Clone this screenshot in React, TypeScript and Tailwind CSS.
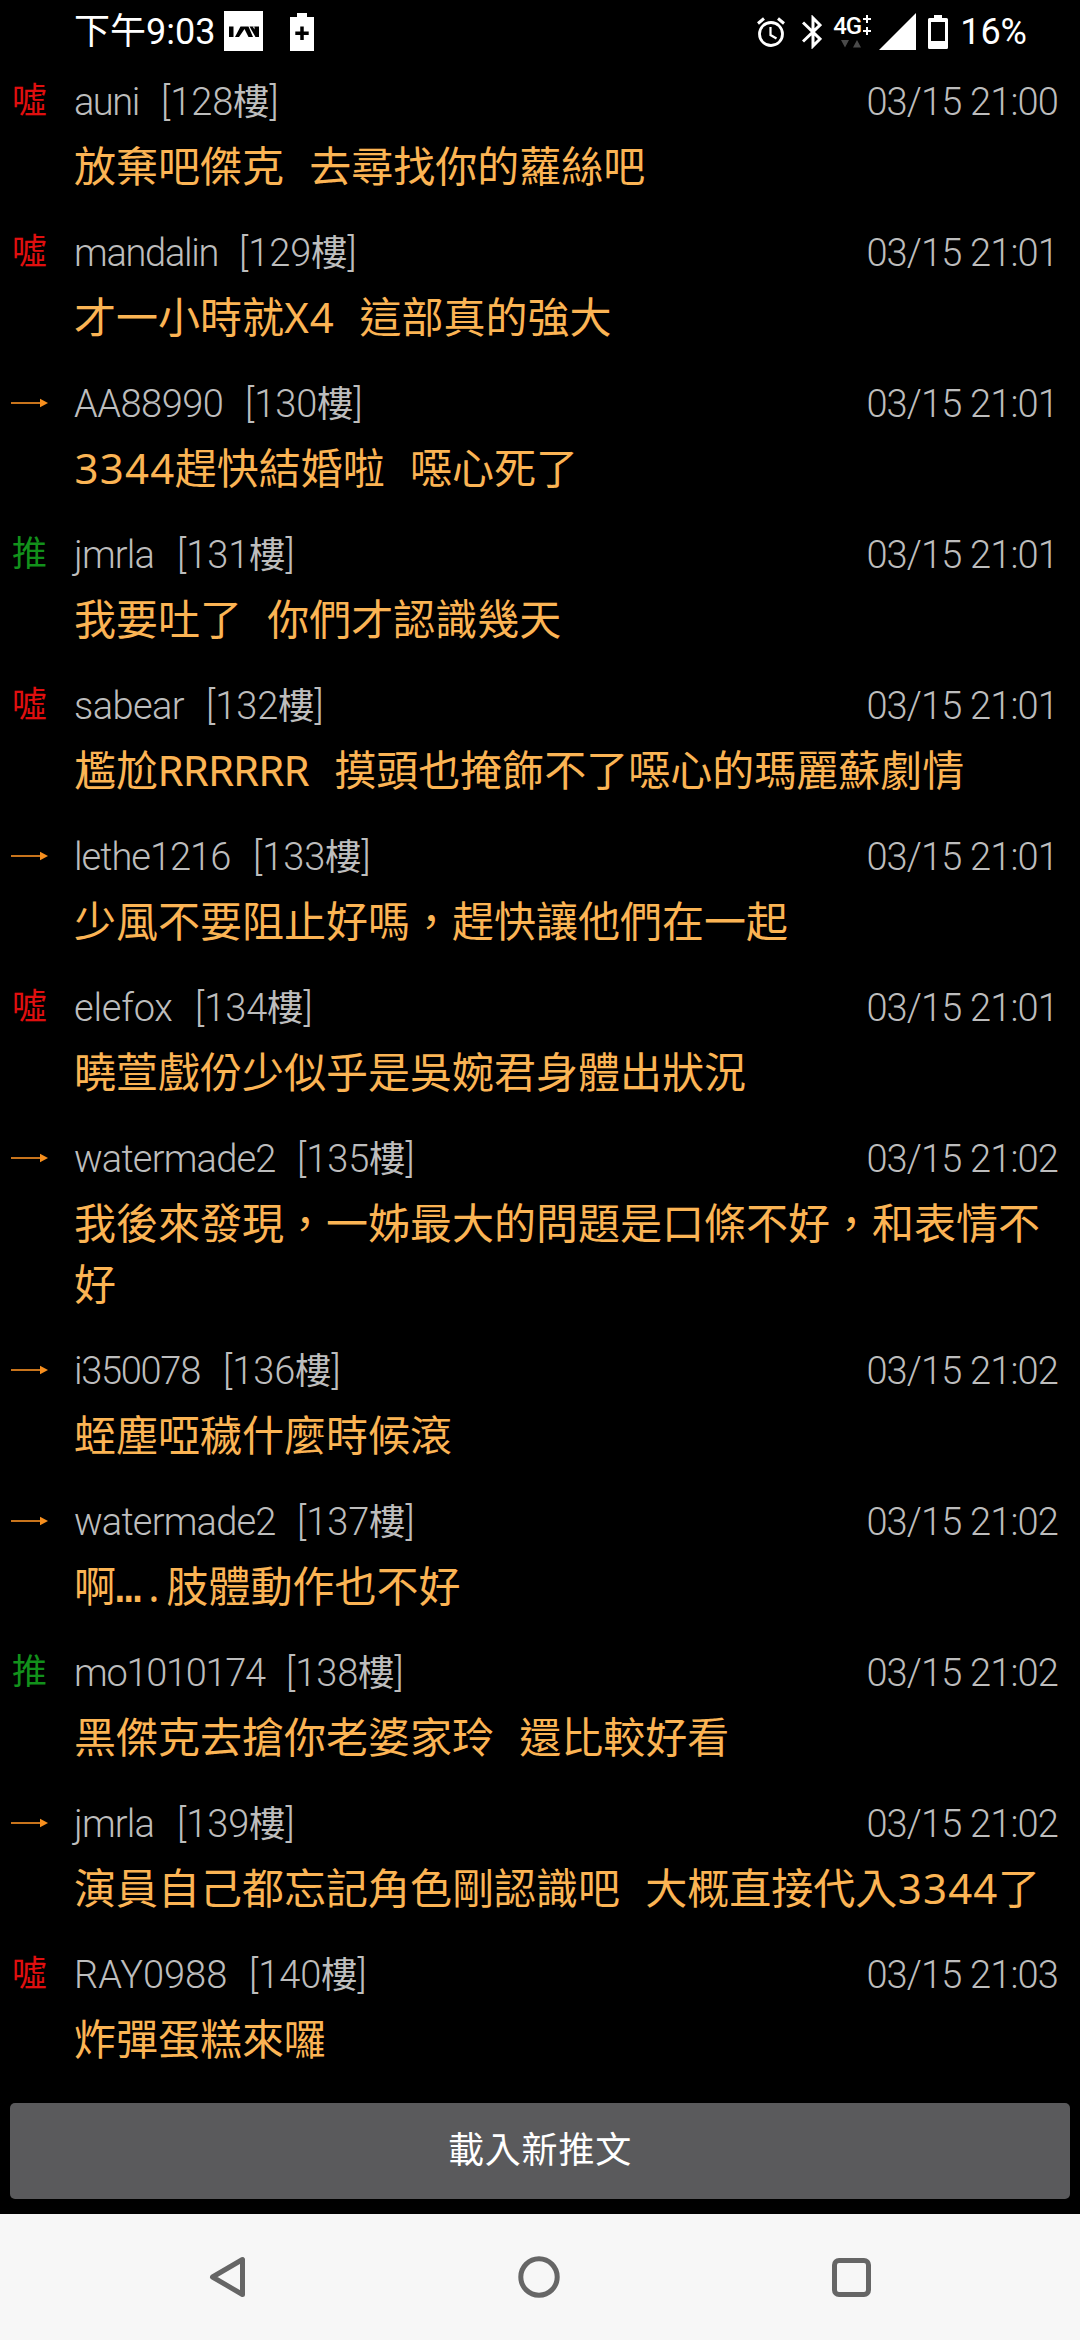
import React from "react";

type Kind = "boo" | "push" | "arrow";

interface Comment {
  kind: Kind;
  name: string;
  /** column width and tracking of the name */
  nameClass: string;
  floor: number;
  time: string;
  text: string;
}

const comments: Comment[] = [
  { kind: "boo", name: "auni", nameClass: "w-[86px] tracking-[-1.5px]", floor: 128, time: "21:00", text: "放棄吧傑克 去尋找你的蘿絲吧" },
  { kind: "boo", name: "mandalin", nameClass: "w-[164px] tracking-[-1.3px]", floor: 129, time: "21:01", text: "才一小時就X4 這部真的強大" },
  { kind: "arrow", name: "AA88990", nameClass: "w-[170px] tracking-[-0.5px]", floor: 130, time: "21:01", text: "3344趕快結婚啦 噁心死了" },
  { kind: "push", name: "jmrla", nameClass: "w-[102px] tracking-[-0.8px]", floor: 131, time: "21:01", text: "我要吐了 你們才認識幾天" },
  { kind: "boo", name: "sabear", nameClass: "w-[131px] tracking-[-0.6px]", floor: 132, time: "21:01", text: "尷尬RRRRRR 摸頭也掩飾不了噁心的瑪麗蘇劇情" },
  { kind: "arrow", name: "lethe1216", nameClass: "w-[178px] tracking-[-1px]", floor: 133, time: "21:01", text: "少風不要阻止好嗎，趕快讓他們在一起" },
  { kind: "boo", name: "elefox", nameClass: "w-[120px] tracking-[-0.2px]", floor: 134, time: "21:01", text: "曉萱戲份少似乎是吳婉君身體出狀況" },
  { kind: "arrow", name: "watermade2", nameClass: "w-[222px] tracking-[-0.8px]", floor: 135, time: "21:02", text: "我後來發現，一姊最大的問題是口條不好，和表情不好" },
  { kind: "arrow", name: "i350078", nameClass: "w-[148px] tracking-[-1.3px]", floor: 136, time: "21:02", text: "蛭塵啞穢什麼時候滾" },
  { kind: "arrow", name: "watermade2", nameClass: "w-[222px] tracking-[-0.8px]", floor: 137, time: "21:02", text: "啊….肢體動作也不好" },
  { kind: "push", name: "mo1010174", nameClass: "w-[211px] tracking-[-1.3px]", floor: 138, time: "21:02", text: "黑傑克去搶你老婆家玲 還比較好看" },
  { kind: "arrow", name: "jmrla", nameClass: "w-[102px] tracking-[-0.8px]", floor: 139, time: "21:02", text: "演員自己都忘記角色剛認識吧 大概直接代入3344了" },
  { kind: "boo", name: "RAY0988", nameClass: "w-[174px]", floor: 140, time: "21:03", text: "炸彈蛋糕來囉" },
];

function Badge({ kind }: { kind: Kind }) {
  if (kind === "arrow") {
    return (
      <svg className="mt-[15px] ml-[11px] h-[10px] w-[37px]" viewBox="0 0 37 10">
        <path d="M0 5H31" stroke="#c8741c" strokeWidth="2" />
        <path d="M29 .8L37 5L29 9.2Z" fill="#f78f1e" />
      </svg>
    );
  }
  return (
    <span
      className={
        kind === "boo"
          ? "ml-[12px] text-[35px] leading-[42px] text-[#e00f0f]"
          : "ml-[12px] text-[35px] leading-[42px] text-[#12911b]"
      }
    >
      {kind === "boo" ? "噓" : "推"}
    </span>
  );
}

/** Message text with half-width characters on a fixed 25.2px pitch. */
function Message({ text }: { text: string }) {
  const parts = text.split(/([\x20-\x7e…]+)/);
  return (
    <p className="mt-[10px] -ml-px font-['Noto_Sans_CJK_TC',sans-serif] text-[42px] leading-[61px] whitespace-pre-wrap text-[#fbb454]">
      {parts.map((part, i) =>
        i % 2 === 0
          ? part
          : Array.from(part).map((ch, j) => (
              <span
                key={`${i}-${j}`}
                className="inline-flex w-[25.2px] justify-center font-['Noto_Sans',sans-serif] leading-[42px]"
              >
                {ch === "…" ? (
                  <span className="font-['Liberation_Mono',monospace] font-bold">{ch}</span>
                ) : (
                  ch
                )}
              </span>
            )),
      )}
    </p>
  );
}

function Row({ c }: { c: Comment }) {
  return (
    <li className="flex pb-[38px] last:pb-0">
      <div className="flex w-[75px] shrink-0 items-start">
        <Badge kind={c.kind} />
      </div>
      <div className="min-w-0 flex-1">
        <div className="flex h-[42px] items-center pr-[22px] text-[38px] leading-[42px] font-light text-[#bdbdbd]">
          <span className={`${c.nameClass} -ml-px shrink-0 whitespace-nowrap`}>{c.name}</span>
          <span className="ml-px whitespace-nowrap">
            [{c.floor}
            <span className="text-[36px] font-normal">樓</span>]
          </span>
          <span className="ml-auto tracking-[-0.85px] whitespace-nowrap">03/15 {c.time}</span>
        </div>
        <Message text={c.text} />
      </div>
    </li>
  );
}

function StatusBar() {
  return (
    <header className="flex h-[64px] shrink-0 items-center pr-[53px] pl-[74px] text-[36px] text-white">
      <span className="w-[142px] whitespace-nowrap">下午9:03</span>
      <svg className="ml-[8px] h-[40px] w-[39px] -translate-y-px" viewBox="0 0 39 40">
        <path fill="#fff" d="M0 0H39V40H0Z" />
        <path
          fill="#000"
          d="M5 15.5H9.500V26H5ZM11 26L16.500 15.5H24.5L29 26H24.500L20.5 18L15 26ZM25.500 15.5H35V26H31.500Z"
        />
        <path fill="#fff" d="M28.700 15.5H30.5V18.500Z" />
      </svg>
      <svg className="ml-[27px] h-[38px] w-[24px]" viewBox="0 0 24 38">
        <path fill="#fff" d="M7 0H17V4H24V38H0V4H7Z" />
        <path stroke="#000" strokeWidth="3.5" d="M12 13.5V27M5.3 20.2H18.7" />
      </svg>
      <svg className="ml-auto h-[30px] w-[28px]" viewBox="0 0 28 30" fill="none" stroke="#fff">
        <circle cx="14" cy="17" r="11.5" strokeWidth="2.8" />
        <path d="M13.5 10V18L19.5 21.5" strokeWidth="2.2" />
        <path d="M1 6.5L7 1.5M21 1.5L27 6.5" strokeWidth="3" />
      </svg>
      <svg
        className="ml-[17px] h-[34px] w-[20px]"
        viewBox="0 0 20 34"
        fill="none"
        stroke="#fff"
        strokeWidth="3"
      >
        <path d="M1 7.5L18 24L11 31V3L18 10L1 26.5" />
      </svg>
      <div className="ml-[11px] flex h-[34px] w-[38px] flex-col">
        <div className="flex h-[22px] items-start">
          <span className="w-[30px] text-[24px] leading-[22px] font-medium tracking-[-1px]">4G</span>
          <svg className="h-[22px] w-[8px] shrink-0" viewBox="0 0 8 22" stroke="#fff" strokeWidth="2">
            <path d="M4 0V8M0 4H8M4 12V20M0 16H8" />
          </svg>
        </div>
        <svg className="mt-[3px] ml-[8px] h-[8px] w-[20px]" viewBox="0 0 20 8" fill="#4a4a4a">
          <path d="M0 0H8L4 7.5ZM12 7.5H20L16 0Z" />
        </svg>
      </div>
      <svg className="ml-[8px] h-[37px] w-[37px] -translate-y-px" viewBox="0 0 37 37">
        <path fill="#fff" d="M37 0V37H0Z" />
      </svg>
      <svg className="ml-[12px] h-[34px] w-[20px]" viewBox="0 0 20 34">
        <path
          fill="#fff"
          fillRule="evenodd"
          d="M6 0H14V3H18.5Q20 3 20 4.5V32.5Q20 34 18.5 34H1.5Q0 34 0 32.5V4.5Q0 3 1.5 3H6ZM3 7V26H17V7Z"
        />
      </svg>
      <span className="ml-[12px]">16%</span>
    </header>
  );
}

function NavBar() {
  return (
    <nav className="flex h-[126px] w-full shrink-0 items-center justify-between bg-[#f7f7f7] px-[209px]">
      <svg className="h-[42px] w-[37px]" viewBox="0 0 37 42" fill="none" stroke="#666" strokeWidth="5">
        <path d="M3.5 21L33.5 3.5V38.5Z" strokeLinejoin="round" />
      </svg>
      <svg className="h-[42px] w-[42px]" viewBox="0 0 42 42" fill="none" stroke="#666" strokeWidth="5">
        <circle cx="21" cy="21" r="18.2" />
      </svg>
      <svg className="h-[39px] w-[39px]" viewBox="0 0 39 39" fill="none" stroke="#666" strokeWidth="5">
        <rect x="2.5" y="2.5" width="34" height="34" rx="4.5" />
      </svg>
    </nav>
  );
}

export default function App() {
  return (
    <div className="flex h-[2340px] w-[1080px] flex-col overflow-hidden bg-black font-['Roboto','Noto_Sans_CJK_TC',sans-serif]">
      <StatusBar />
      <ul className="mt-[17px]">
        {comments.map((c) => (
          <Row key={c.floor} c={c} />
        ))}
      </ul>
      <button
        type="button"
        className="mx-[10px] mt-auto mb-[15px] h-[96px] shrink-0 rounded-[5px] bg-[#5a5a5c] text-[36px] tracking-[0.8px] text-white"
      >
        載入新推文
      </button>
      <NavBar />
    </div>
  );
}
